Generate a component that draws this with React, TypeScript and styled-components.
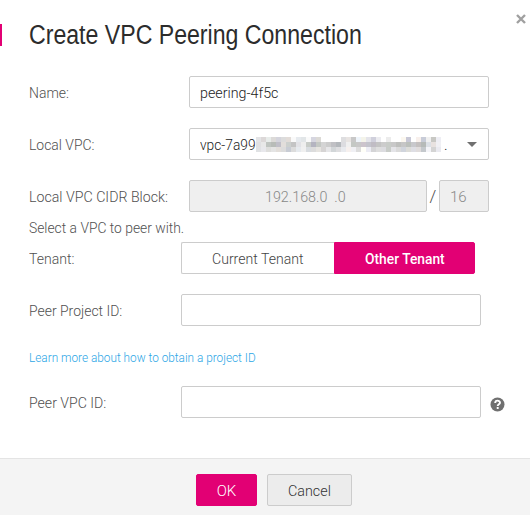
import React, { useLayoutEffect, useRef } from "react";
import styled, { createGlobalStyle } from "styled-components";

const Global = createGlobalStyle`
  * { box-sizing: border-box; }
  body { margin: 0; background: #fff; }
`;

const Dialog = styled.div`
  width: 530px;
  height: 515px;
  display: flex;
  flex-direction: column;
  position: relative;
  overflow: hidden;
  font-family: Roboto, "Liberation Sans", sans-serif;
  font-weight: 300;
  font-size: 15px;
  line-height: 20px;
  color: #4a4a4a;
`;

const FitBox = styled.span<{ $w: number }>`
  display: inline-block;
  flex: none;
  width: ${(p) => p.$w}px;
  white-space: pre;
`;
const FitInner = styled.span`
  display: inline-block;
  transform-origin: 0 50%;
`;

/* Condenses or widens a line of text to a given width. */
function Fit({ w, children }: { w: number; children: string }) {
  const ref = useRef<HTMLSpanElement>(null);
  useLayoutEffect(() => {
    const el = ref.current;
    if (el) el.style.transform = `scaleX(${w / el.offsetWidth})`;
  }, [w]);
  return (
    <FitBox $w={w}>
      <FitInner ref={ref}>{children}</FitInner>
    </FitBox>
  );
}

const Header = styled.header`
  display: flex;
  align-items: center;
  height: 22px;
  margin-top: 24px;
`;
const Accent = styled.div`
  width: 2px;
  height: 22px;
  background: #e20074;
  margin-right: 27px;
`;
const Title = styled.h1`
  margin: 0;
  font: 400 27px/30px "Liberation Sans", Arial, sans-serif;
  color: #2c2c2c;
`;
const Close = styled.button`
  position: absolute;
  left: 515px;
  top: 13px;
  width: 12px;
  height: 12px;
  padding: 0;
  border: 0;
  background: none;
  display: flex;
`;

const Form = styled.main`
  display: flex;
  flex-direction: column;
  padding: 30px 0 0 29px;
  height: 412px;
`;
const Row = styled.div<{ $gap?: number }>`
  display: flex;
  align-items: center;
  height: 32px;
  flex: none;
  margin-bottom: ${(p) => p.$gap ?? 20}px;
`;
const LabelCell = styled.label<{ $w?: number }>`
  width: ${(p) => p.$w ?? 152}px;
  flex: none;
  padding-top: 1px;
  color: #505050;
`;
const Box = styled.div<{ $w: number; $pad?: number; $disabled?: boolean }>`
  display: flex;
  align-items: center;
  width: ${(p) => p.$w}px;
  height: 32px;
  padding: 1px 0 0 ${(p) => p.$pad ?? 10}px;
  border: 1px solid #ccc;
  border-radius: 2px;
  background: ${(p) => (p.$disabled ? "#efefef" : "#fff")};
  color: ${(p) => (p.$disabled ? "#888" : "#222")};
`;
const Slash = styled.span`
  width: 12px;
  text-align: center;
  font-size: 17px;
`;
const Note = styled.p`
  margin: 0 0 4px;
  height: 26px;
  padding-top: 2px;
  color: #505050;
  line-height: 28px;
`;
const Tab = styled.button<{ $w: number; $active?: boolean }>`
  display: flex;
  align-items: center;
  justify-content: center;
  width: ${(p) => p.$w}px;
  height: 32px;
  padding: 1px 0 0;
  border: 1px solid ${(p) => (p.$active ? "#e20074" : "#ccc")};
  border-right-width: ${(p) => (p.$active ? 1 : 0)}px;
  border-radius: ${(p) => (p.$active ? "0 2px 2px 0" : "2px 0 0 2px")};
  background: ${(p) => (p.$active ? "#e20074" : "#fff")};
  color: ${(p) => (p.$active ? "#fff" : "#444")};
  font: inherit;
  font-weight: ${(p) => (p.$active ? 500 : 300)};
`;
const Link = styled.a`
  height: 20px;
  margin: 1px 0 19px;
  font-size: 13px;
  font-weight: 300;
  line-height: 21px;
  color: #2ba6e6;
`;
const Mosaic = styled.svg`
  flex: none;
  margin-right: 3px;
`;
const Caret = styled.svg`
  flex: none;
  margin-left: 19px;
`;
const Help = styled.svg`
  margin: 4px 0 0 9px;
`;
const Footer = styled.footer`
  height: 57px;
  border-top: 1px solid #e4e4e4;
  background: #f4f4f4;
  display: flex;
  gap: 10px;
  padding: 15px 0 0 196px;
`;
const Action = styled.button<{ $primary?: boolean }>`
  display: flex;
  align-items: center;
  justify-content: center;
  width: ${(p) => (p.$primary ? 61 : 85)}px;
  height: 32px;
  padding: 1px 0 0;
  border: 1px solid ${(p) => (p.$primary ? "#e20074" : "#ccc")};
  border-radius: 2px;
  background: ${(p) => (p.$primary ? "#e20074" : "#ececec")};
  color: ${(p) => (p.$primary ? "#fff" : "#333")};
  font: inherit;
`;

/* Pixelated part of the VPC id: three rows of 5px blocks. */
const blocks = [
  "e4e4e6 dcd8d8 e8ecea dcdad8 d4d4dc dcdcdc e2dcd8 fafafa e6eaee e2e6e8 fafafa d6d6e0 dcdad6 ffffff ffffff ffffff ffffff dedee0 e8e4e2 c8c8c8 eef4fa f4f4ea e4e4ea d0d0dc ececf0 ffffff ececec ffffff ffffff fcf8f0 c8c8d6 ffffff f8f0ec c8ccd8 f0f0f0 c8c8c4 eeeef4",
  "e0e0e2 e8e8e8 bfc4c0 b8bcb8 c0bfc8 e2dedb ccd0ce c4c4c4 e2e2e6 eeeeee c8ccc8 b4b4c0 c4c8c4 d4d4d4 cccccc c0c0c4 b4b8bc dcdce0 f0f0f0 c4c8c4 c8c8c8 ccc4cc c4c4cc c0bcc4 c4c4c4 cccccc c8ccc8 c8c8c8 bebfbd c6c6c6 bcc0bc c8c8cc c4c0c0 b6bab8 dce0e6 e8e2e0 f0f0f4",
  "e0e2e4 e8e8ec dededc e4e4e4 e2deda dcdcdc c8ccd4 dcdcdc e6eaee f0f0f0 d8dce0 dcdcdc e6e4e0 d6d4d4 e6e6e8 d2d6d8 dedee0 e8eaee f6f0ee f0f0f4 dcdcdc fffff8 ececf4 d4d4d6 dedede dcdce0 c8ccc8 e4e4e8 dadada d0d4dc dcdcd8 dedee4 e0dcdc c4c8cc f4f4f8 d4d4d4 eaeaf0",
].map((row) => row.split(" "));

export default function App() {
  return (
    <>
      <Global />
      <Dialog>
        <Header>
          <Accent />
          <Title><Fit w={333}>Create VPC Peering Connection</Fit></Title>
        </Header>
        <Close aria-label="Close">
          <svg width="12" height="12"><path d="M2 2 L10 10 M10 2 L2 10" stroke="#a0a0a0" strokeWidth="2.4" /></svg>
        </Close>
        <Form>
          <Row>
            <LabelCell $w={160}><Fit w={40}>Name:</Fit></LabelCell>
            <Box $w={300}><Fit w={78}>peering-4f5c</Fit></Box>
          </Row>
          <Row>
            <LabelCell $w={160}><Fit w={66}>Local VPC:</Fit></LabelCell>
            <Box $w={300}>
              <Fit w={56}>vpc-7a99</Fit>
              <Mosaic width="185" height="15" shapeRendering="crispEdges">
                {blocks.map((row, y) =>
                  row.map((c, x) => (
                    <rect key={`${x}-${y}`} x={x * 5} y={y * 5} width="5" height="5" fill={`#${c}`} />
                  ))
                )}
              </Mosaic>
              <Fit w={4}>.</Fit>
              <Caret width="10" height="5"><path d="M0 0 H10 L5 5 Z" fill="#707070" /></Caret>
            </Box>
          </Row>
          <Row $gap={0}>
            <LabelCell $w={160}><Fit w={139}>Local VPC CIDR Block:</Fit></LabelCell>
            <Box $w={238} $pad={75} $disabled><Fit w={81}>192.168.0  .0</Fit></Box>
            <Slash>/</Slash>
            <Box $w={50} $pad={10} $disabled><Fit w={17}>16</Fit></Box>
          </Row>
          <Note><Fit w={155}>Select a VPC to peer with.</Fit></Note>
          <Row>
            <LabelCell><Fit w={46}>Tenant:</Fit></LabelCell>
            <Tab $w={153}><Fit w={92}>Current Tenant</Fit></Tab>
            <Tab $w={141} $active><Fit w={80}>Other Tenant</Fit></Tab>
          </Row>
          <Row>
            <LabelCell><Fit w={93}>Peer Project ID:</Fit></LabelCell>
            <Box $w={300} />
          </Row>
          <Link><Fit w={227}>Learn more about how to obtain a project ID</Fit></Link>
          <Row>
            <LabelCell><Fit w={77}>Peer VPC ID:</Fit></LabelCell>
            <Box $w={300} />
            <Help width="15" height="15"><circle cx="7.5" cy="7.5" r="7" fill="#707070" /><path d="M5.2 6 C5.2 2.8 10 3 10 5.7 C10 7.4 7.7 7.2 7.7 9 M7.7 10 V12" fill="none" stroke="#fff" strokeWidth="1.9" /></Help>
          </Row>
        </Form>
        <Footer>
          <Action $primary><Fit w={20}>OK</Fit></Action>
          <Action><Fit w={43}>Cancel</Fit></Action>
        </Footer>
      </Dialog>
    </>
  );
}
